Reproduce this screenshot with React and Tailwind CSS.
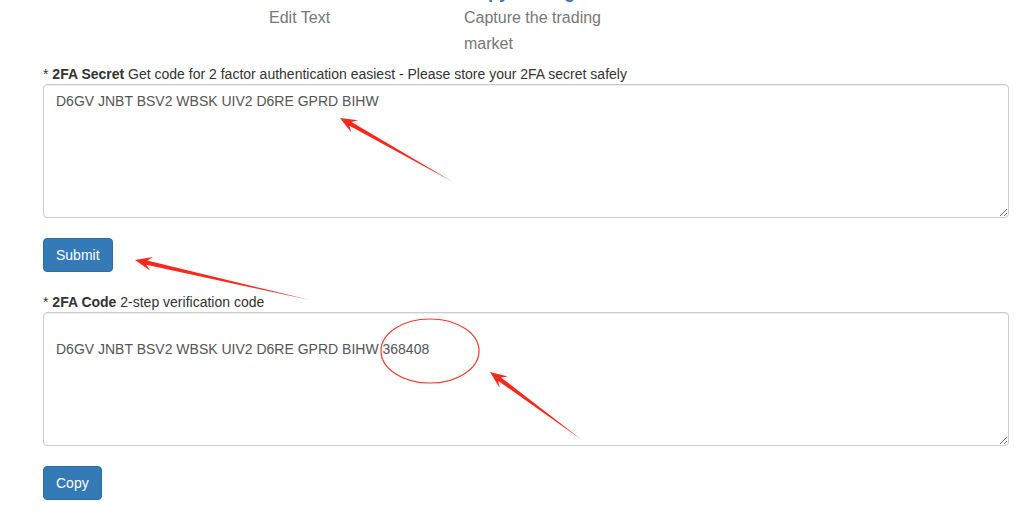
import React from 'react';

const secret = 'D6GV JNBT BSV2 WBSK UIV2 D6RE GPRD BIHW';

// tapering red arrow from tail (x1,y1) to tip (x2,y2)
function arrowPoints(x1, y1, x2, y2) {
  const len = Math.hypot(x2 - x1, y2 - y1);
  const dx = (x2 - x1) / len;
  const dy = (y2 - y1) / len;
  const nx = -dy;
  const ny = dx;
  const head = 17;
  const wing = 7;
  const shaft = 2.2;
  const bx = x2 - dx * head;
  const by = y2 - dy * head;
  const nb = x2 - dx * (head - 5);
  const nby = y2 - dy * (head - 5);
  const pts = [
    [x1, y1],
    [nb + nx * shaft, nby + ny * shaft],
    [bx + nx * wing, by + ny * wing],
    [x2, y2],
    [bx - nx * wing, by - ny * wing],
    [nb - nx * shaft, nby - ny * shaft],
  ];
  return pts.map(p => p.map(v => v.toFixed(1)).join(',')).join(' ');
}

const Annotations = () => (
  <svg className="absolute inset-0 pointer-events-none" width="1031" height="516">
    <polygon points={arrowPoints(453, 182, 340, 118)} fill="#f7281c" />
    <polygon points={arrowPoints(310, 300, 135, 260)} fill="#f7281c" />
    <polygon points={arrowPoints(582, 440, 490, 372)} fill="#f7281c" />
    <ellipse cx="430" cy="351" rx="49" ry="32" fill="none" stroke="#f23a30" strokeWidth="1.2" />
  </svg>
);

const Field = ({ title, hint, value }) => (
  <div>
    <label className="block text-[14px] leading-[20px] text-[#333]">
      * <b>{title}</b> {hint}
    </label>
    <textarea
      readOnly
      defaultValue={value}
      className="block w-[966px] h-[134px] border border-[#ccc] rounded-[4px] px-[12px] py-[6px] text-[14px] leading-[20px] text-[#555] shadow-[inset_0_1px_1px_rgba(0,0,0,0.075)] outline-none"
    />
  </div>
);

const Button = ({ children }) => (
  <button className="bg-[#337ab7] border border-[#2e6da4] rounded-[4px] px-[12px] py-[6px] text-[14px] leading-[20px] text-white">
    {children}
  </button>
);

export default function App() {
  return (
    <div className="relative w-[1031px] h-[516px] overflow-hidden bg-white font-['Liberation_Sans',Arial,sans-serif]">
      <div className="flex pl-[269px]">
        <div className="w-[195px]">
          <div className="h-[5px]" />
          <p className="text-[16px] leading-[26px] text-[#777]">Edit Text</p>
        </div>
        <div className="w-[160px]">
          <div className="h-[5px] overflow-hidden">
            <div className="mt-[-18px] text-[18px] leading-[20px] font-bold text-[#337ab7] whitespace-nowrap">Copy trading</div>
          </div>
          <p className="text-[16px] leading-[26px] text-[#777]">Capture the trading market</p>
        </div>
      </div>

      <div className="pl-[43px] pt-[7px]">
        <Field
          title="2FA Secret"
          hint="Get code for 2 factor authentication easiest - Please store your 2FA secret safely"
          value={secret}
        />
        <div className="mt-[20px]">
          <Button>Submit</Button>
        </div>
        <div className="mt-[20px]">
          <Field title="2FA Code" hint="2-step verification code" value={'\n' + secret + ' 368408'} />
        </div>
        <div className="mt-[20px]">
          <Button>Copy</Button>
        </div>
      </div>

      <Annotations />
    </div>
  );
}
